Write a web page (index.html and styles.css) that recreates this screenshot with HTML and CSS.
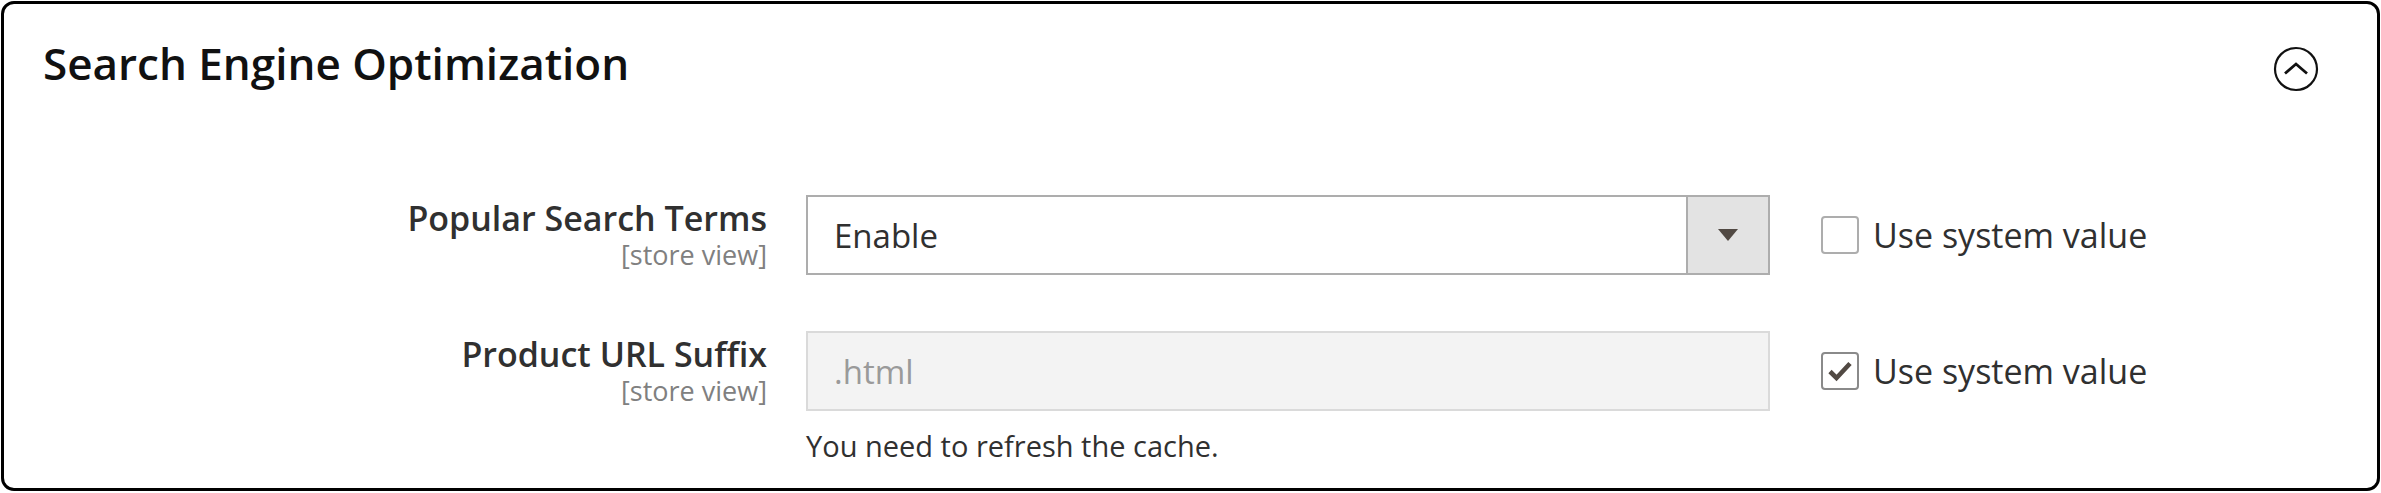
FILE: index.html
```html
<!DOCTYPE html>
<html lang="en">
<head>
<meta charset="utf-8">
<title>Search Engine Optimization</title>
<link rel="stylesheet" href="styles.css">
</head>
<body>
<section class="panel">
  <header class="panel-head">
    <h2 class="panel-title">Search Engine Optimization</h2>
    <svg class="toggle" width="46" height="46" viewBox="0 0 46 46" aria-hidden="true">
      <circle cx="23" cy="23" r="21" fill="none" stroke="#111111" stroke-width="2.2"/>
      <polyline points="12,27.5 23,18 34,27.5" fill="none" stroke="#111111" stroke-width="2.8" stroke-linejoin="miter"/>
    </svg>
  </header>
  <div class="fields">
    <div class="row">
      <div class="label-cell">
        <div class="label">Popular Search Terms</div>
        <div class="scope">[store view]</div>
      </div>
      <div class="control">
        <div class="select">
          <span class="select-value">Enable</span>
          <span class="select-btn"><span class="caret"></span></span>
        </div>
      </div>
      <div class="system">
        <span class="checkbox"></span>
        <span class="system-text">Use system value</span>
      </div>
    </div>
    <div class="row">
      <div class="label-cell">
        <div class="label">Product URL Suffix</div>
        <div class="scope">[store view]</div>
      </div>
      <div class="control">
        <div class="input disabled">.html</div>
        <div class="note">You need to refresh the cache.</div>
      </div>
      <div class="system">
        <span class="checkbox checked">
          <svg width="28" height="28" viewBox="0 0 28 28" aria-hidden="true">
            <polyline points="4,14.5 10.5,21 24,6.5" fill="none" stroke="#514943" stroke-width="4.6" stroke-linecap="butt" stroke-linejoin="miter"/>
          </svg>
        </span>
        <span class="system-text">Use system value</span>
      </div>
    </div>
  </div>
</section>
</body>
</html>
```

FILE: styles.css
```css
* { box-sizing: border-box; }

html, body {
  margin: 0;
  padding: 0;
  background: #ffffff;
}

body {
  font-family: "Open Sans", "Liberation Sans", sans-serif;
  color: #303030;
}

.panel {
  margin: 1px 1px 0 1px;
  width: 2379px;
  height: 490px;
  border: 3px solid #000000;
  border-radius: 13px;
  background: #ffffff;
}

.panel-head {
  display: flex;
  justify-content: space-between;
  align-items: flex-start;
  padding: 31px 58px 0 39px;
}

.panel-title {
  margin: 0;
  font-size: 44px;
  font-weight: 600;
  line-height: 1.3;
  color: #111111;
}

.toggle {
  margin-top: 11px;
  display: block;
}

.fields {
  margin-top: 103px;
  display: flex;
  flex-direction: column;
  gap: 56px;
}

.row {
  display: grid;
  grid-template-columns: 802px 964px 1fr;
  align-items: start;
}

.label-cell {
  text-align: right;
  padding-right: 39px;
}

.label {
  font-size: 34px;
  font-weight: 600;
  line-height: 1.36;
  color: #303030;
}

.scope {
  font-size: 27px;
  line-height: 1;
  color: #808080;
}

.select {
  display: flex;
  height: 80px;
  border: 2px solid #adadad;
  background: #ffffff;
}

.select-value {
  flex: 1;
  display: flex;
  align-items: center;
  padding-left: 26px;
  font-size: 33px;
  color: #303030;
}

.select-btn {
  width: 82px;
  border-left: 2px solid #adadad;
  background: #e3e3e3;
  display: flex;
  align-items: center;
  justify-content: center;
}

.caret {
  width: 0;
  height: 0;
  border-left: 10px solid transparent;
  border-right: 10px solid transparent;
  border-top: 12px solid #514943;
}

.input {
  height: 80px;
  border: 2px solid #dadada;
  display: flex;
  align-items: center;
  padding-left: 26px;
  font-size: 33px;
}

.input.disabled {
  background: #f3f3f3;
  color: #9a9a9a;
}

.note {
  margin-top: 15px;
  font-size: 29px;
  line-height: 1.36;
  color: #303030;
}

.system {
  height: 80px;
  display: flex;
  align-items: center;
  padding-left: 51px;
  gap: 14px;
}

.checkbox {
  width: 38px;
  height: 38px;
  border: 2px solid #adadad;
  border-radius: 4px;
  background: #ffffff;
  display: flex;
  align-items: center;
  justify-content: center;
}

.checkbox.checked { border-color: #8a8a8a; }

.checkbox svg { display: block; }

.system-text {
  font-size: 34px;
  color: #303030;
}
```
